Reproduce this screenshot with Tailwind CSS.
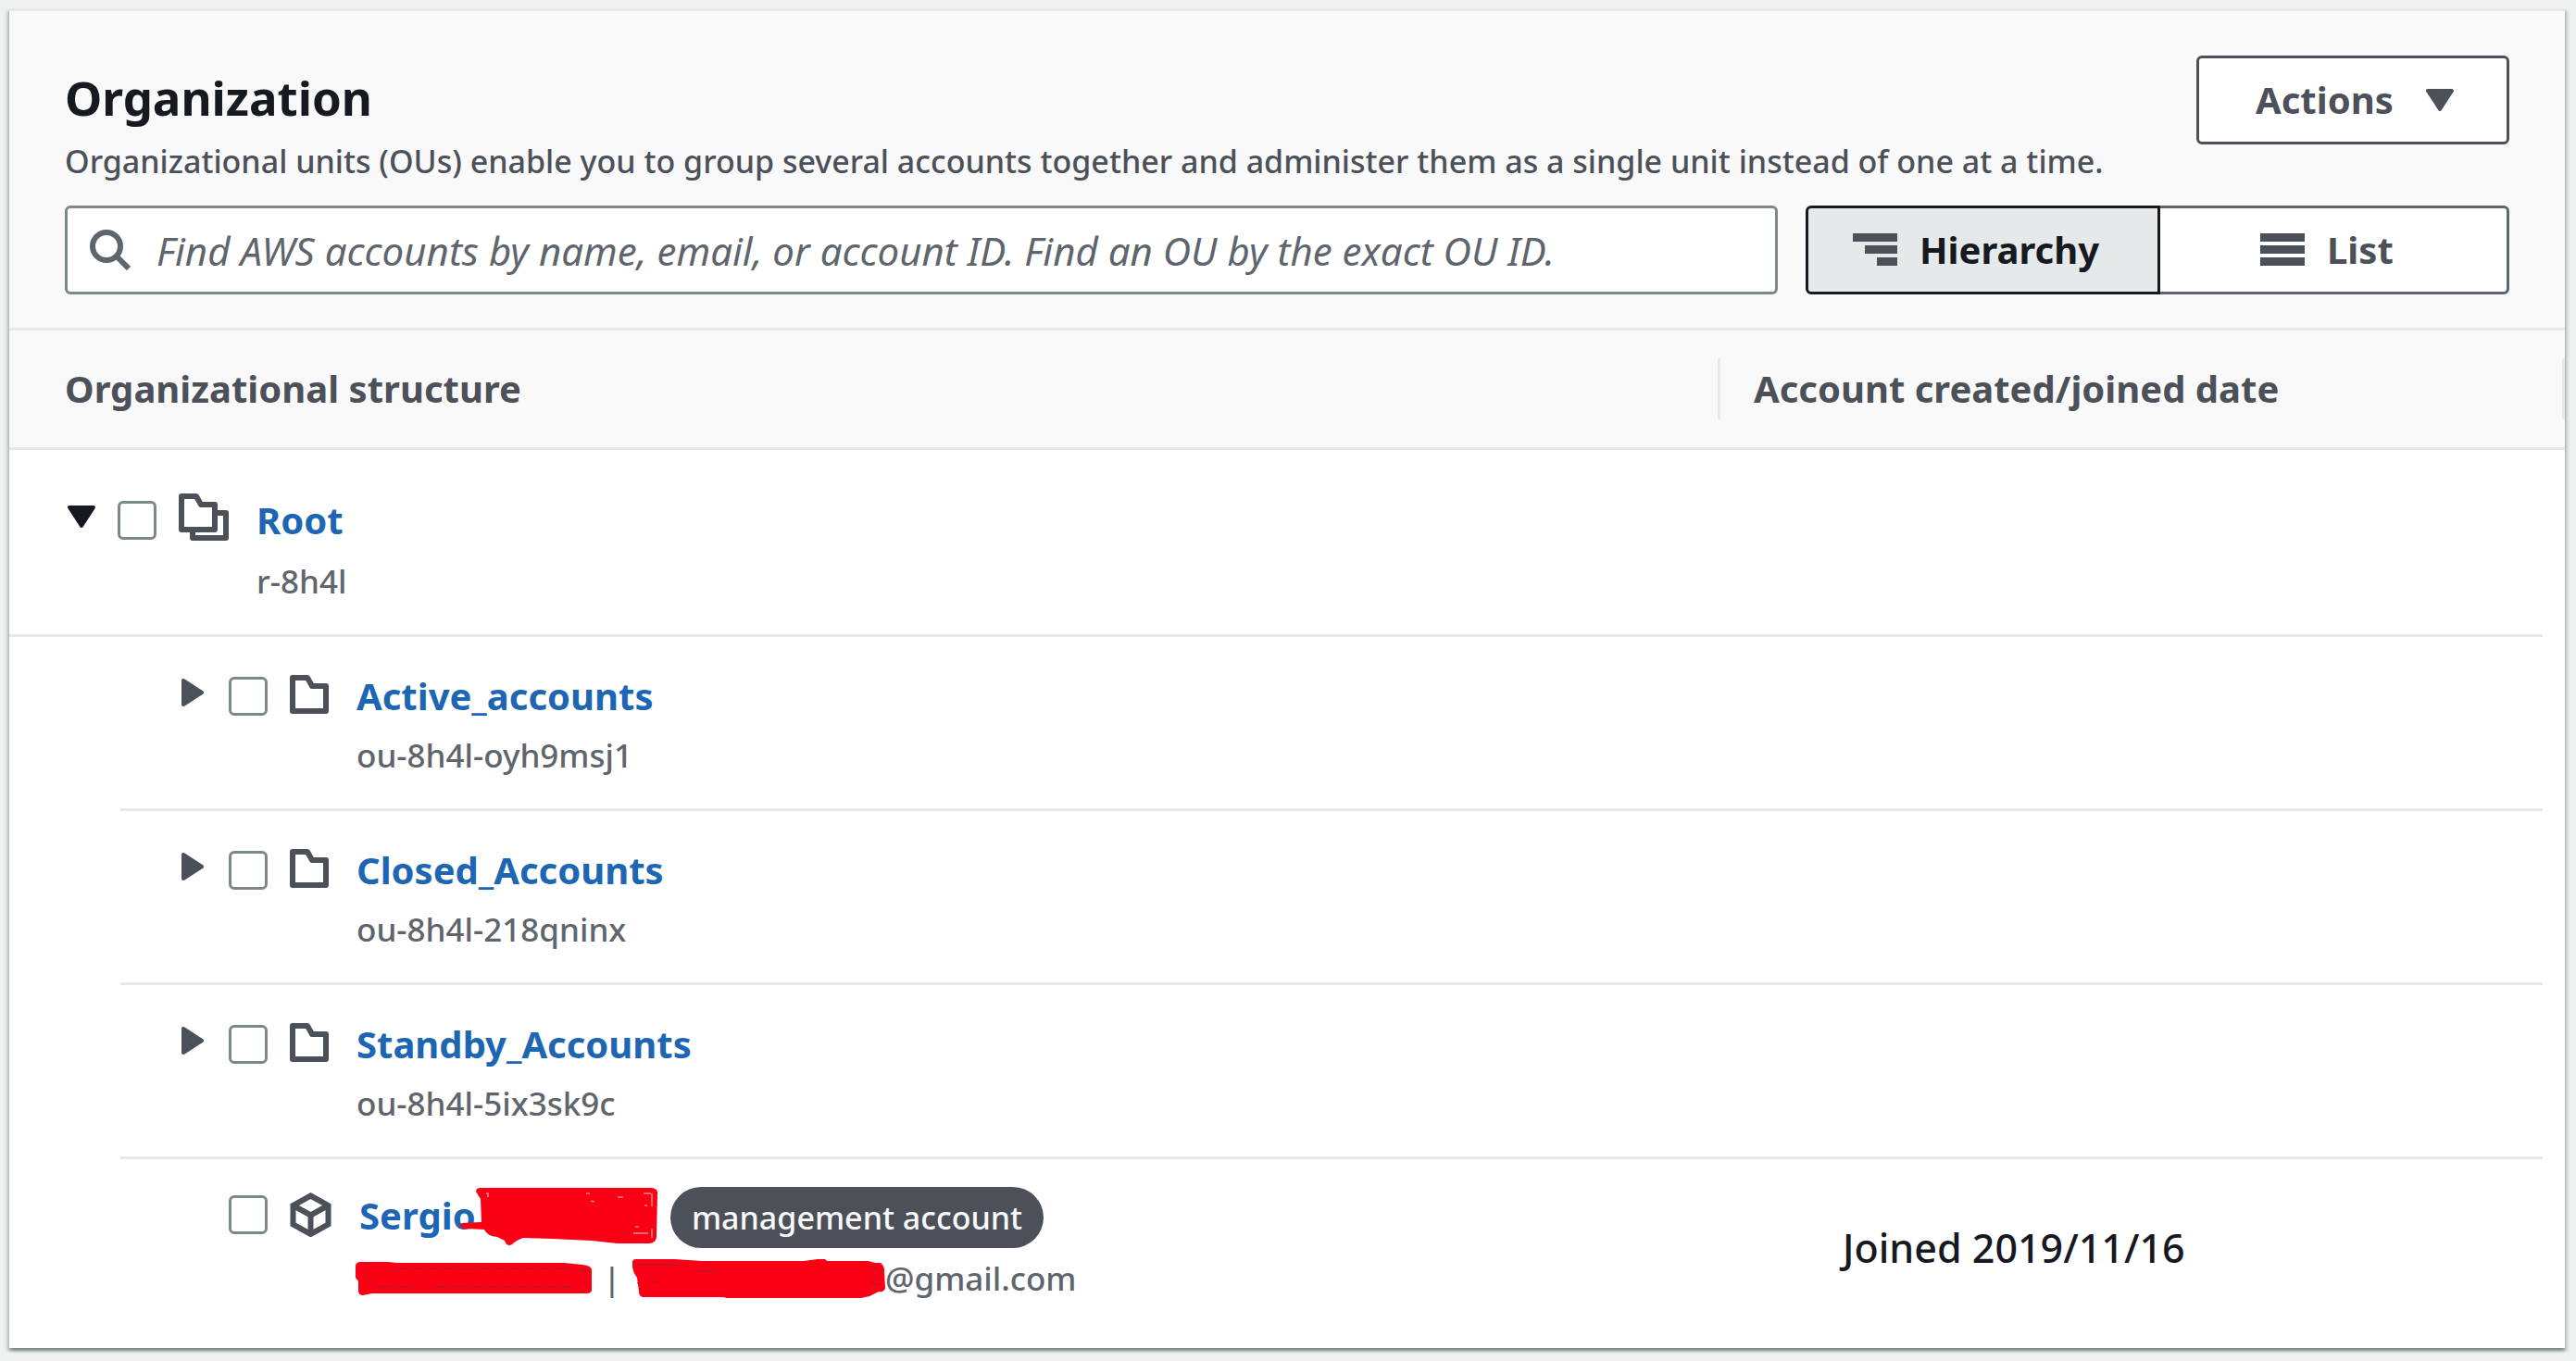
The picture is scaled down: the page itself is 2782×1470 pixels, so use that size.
<!DOCTYPE html>
<html lang="en">
<head>
<meta charset="utf-8">
<title>Organization</title>
<script src="https://cdn.jsdelivr.net/npm/@tailwindcss/browser@4"></script>
</head>
<body class="min-h-screen bg-[#eff1f0] pt-[9px] pr-3 pb-4 pl-[10px] font-['Noto_Sans',sans-serif] text-[#16191f]">
<svg class="hidden" aria-hidden="true">
  <symbol id="caret-down" viewBox="0 0 30 24"><path d="M2 2H28L15 22Z" fill="currentColor" stroke="currentColor" stroke-width="4" stroke-linejoin="round"/></symbol>
  <symbol id="caret-right" viewBox="0 0 24 30"><path d="M2 2V28L22 15Z" fill="currentColor" stroke="currentColor" stroke-width="4" stroke-linejoin="round"/></symbol>
  <symbol id="folder" viewBox="0 0 42 42"><path d="M3 3H19L24 12H39V39H3Z" fill="none" stroke="currentColor" stroke-width="6" stroke-linejoin="round"/></symbol>
</svg>
<main class="border-t-3 border-[#e6e9e8] bg-white shadow-[0_3px_3px_0_rgb(0_28_36/.3),3px_3px_3px_0_rgb(0_28_36/.15),-3px_3px_3px_0_rgb(0_28_36/.15)]">
  <header class="border-b-3 border-[#e6e9e8] bg-[#f9f9f9] pt-12 pr-[60px] pb-9 pl-[60px]">
    <div class="flex items-start justify-between">
      <div class="pt-[15px]">
        <h1 class="text-[51px] leading-[60px] font-bold">Organization</h1>
        <p class="mt-3 text-[34px] leading-[54px] font-medium text-[#4c5059]">Organizational units (OUs) enable you to group several accounts together and administer them as a single unit instead of one at a time.</p>
      </div>
      <button type="button" class="flex h-24 w-[338px] shrink-0 items-center justify-between rounded-md border-3 border-[#4c5059] bg-white px-[57px] text-[40px] font-bold text-[#4c5059]">
        <span class="pl-1">Actions</span>
        <svg class="h-6 w-[30px]"><use href="#caret-down"/></svg>
      </button>
    </div>
    <div class="mt-[21px] flex gap-[30px]">
      <label class="flex h-24 flex-1 items-center rounded-md border-3 border-[#7b8989] bg-white px-6 text-[#5f656d]">
        <svg class="h-11 w-11 shrink-0" viewBox="0 0 44 44" fill="none" stroke="currentColor" stroke-width="6"><circle cx="18" cy="18" r="15"/><path d="M29 29L42 42"/></svg>
        <input type="search" aria-label="Find accounts" placeholder="Find AWS accounts by name, email, or account ID. Find an OU by the exact OU ID." class="ml-7 h-full min-w-0 flex-1 text-[42px] italic outline-none placeholder:text-[#5f656d] placeholder:opacity-100">
      </label>
      <div class="flex text-[40px] font-bold" role="group" aria-label="View">
        <button type="button" aria-pressed="true" class="flex h-24 w-[383px] items-center gap-6 rounded-l-md border-3 border-[#16191f] bg-[#e6e9ea] pl-12">
          <svg class="h-9 w-12 text-[#4c5059]" viewBox="0 0 48 36" fill="currentColor"><path d="M0 0H48V9H0ZM13 13H48V22H13ZM26 26H48V35H26Z"/></svg>
          Hierarchy
        </button>
        <button type="button" aria-pressed="false" class="flex h-24 w-[377px] items-center gap-6 rounded-r-md border-3 border-l-0 border-[#5f656d] bg-white pl-27 text-[#4c5059]">
          <svg class="h-9 w-12" viewBox="0 0 48 36" fill="currentColor"><path d="M0 0H48V9H0ZM0 13H48V22H0ZM0 26H48V35H0Z"/></svg>
          List
        </button>
      </div>
    </div>
  </header>

  <table class="w-full table-fixed border-separate border-spacing-0">
    <colgroup><col class="w-[120px]"><col><col class="w-[888px]"><col class="w-6"></colgroup>
    <thead class="bg-[#f9f9f9] text-left text-[40px] text-[#4c5059]">
      <tr>
        <th colspan="2" scope="col" class="border-b-3 border-[#e6e9e8] py-[30px] pl-[60px]"><div class="h-[66px] border-r-3 border-[#e6e9e8] leading-[66px] font-bold">Organizational structure</div></th>
        <th colspan="2" scope="col" class="border-b-3 border-[#e6e9e8] py-[30px] pl-9"><div class="h-[66px] border-r-3 border-[#e6e9e8] leading-[66px] font-bold">Account created/joined date</div></th>
      </tr>
    </thead>
    <tbody class="text-[35px] leading-[54px] font-medium text-[#5f656d]">
      <tr>
        <td colspan="2" class="border-b-3 border-[#e6e9e8] pt-[49px] pb-[30px] pl-[63px]">
          <div class="flex items-start">
            <div class="flex h-[54px] items-center gap-6">
              <button type="button" aria-label="Collapse Root" class="pb-2 text-[#16191f]"><svg class="h-6 w-[30px]"><use href="#caret-down"/></svg></button>
              <input type="checkbox" aria-label="Select Root" class="size-[42px] appearance-none rounded-md border-3 border-[#7b8989] bg-white">
              <svg class="mb-2 h-[51px] w-[54px] text-[#4c5059]" viewBox="0 0 54 51" fill="none" stroke="currentColor" stroke-width="6" stroke-linejoin="round"><path d="M3 3H19L24 12H39V39H3Z"/><path d="M41 21H51V48H15V41"/></svg>
            </div>
            <div class="ml-[30px]">
              <a href="#root" class="block text-[40px] font-bold text-[#1c66b3]">Root</a>
              <p class="mt-3">r-8h4l</p>
            </div>
          </div>
        </td>
        <td class="border-b-3 border-[#e6e9e8]"></td><td></td>
      </tr>
      <tr>
        <td></td>
        <td class="border-b-3 border-[#e6e9e8] pt-[37px] pb-[30px] pl-[66px]">
          <div class="flex items-start">
            <div class="flex h-[54px] items-center gap-6">
              <button type="button" aria-label="Expand Active_accounts" class="w-[27px] pb-2 text-[#4c5059]"><svg class="h-[30px] w-6"><use href="#caret-right"/></svg></button>
              <input type="checkbox" aria-label="Select Active_accounts" class="size-[42px] appearance-none rounded-md border-3 border-[#7b8989] bg-white">
              <svg class="mb-1 size-[42px] text-[#4c5059]"><use href="#folder"/></svg>
            </div>
            <div class="ml-[30px]">
              <a href="#active" class="block text-[40px] font-bold text-[#1c66b3]">Active_accounts</a>
              <p class="mt-[10px]">ou-8h4l-oyh9msj1</p>
            </div>
          </div>
        </td>
        <td class="border-b-3 border-[#e6e9e8]"></td><td></td>
      </tr>
      <tr>
        <td></td>
        <td class="border-b-3 border-[#e6e9e8] pt-[37px] pb-[30px] pl-[66px]">
          <div class="flex items-start">
            <div class="flex h-[54px] items-center gap-6">
              <button type="button" aria-label="Expand Closed_Accounts" class="w-[27px] pb-2 text-[#4c5059]"><svg class="h-[30px] w-6"><use href="#caret-right"/></svg></button>
              <input type="checkbox" aria-label="Select Closed_Accounts" class="size-[42px] appearance-none rounded-md border-3 border-[#7b8989] bg-white">
              <svg class="mb-1 size-[42px] text-[#4c5059]"><use href="#folder"/></svg>
            </div>
            <div class="ml-[30px]">
              <a href="#closed" class="block text-[40px] font-bold text-[#1c66b3]">Closed_Accounts</a>
              <p class="mt-[10px]">ou-8h4l-218qninx</p>
            </div>
          </div>
        </td>
        <td class="border-b-3 border-[#e6e9e8]"></td><td></td>
      </tr>
      <tr>
        <td></td>
        <td class="border-b-3 border-[#e6e9e8] pt-[37px] pb-[30px] pl-[66px]">
          <div class="flex items-start">
            <div class="flex h-[54px] items-center gap-6">
              <button type="button" aria-label="Expand Standby_Accounts" class="w-[27px] pb-2 text-[#4c5059]"><svg class="h-[30px] w-6"><use href="#caret-right"/></svg></button>
              <input type="checkbox" aria-label="Select Standby_Accounts" class="size-[42px] appearance-none rounded-md border-3 border-[#7b8989] bg-white">
              <svg class="mb-1 size-[42px] text-[#4c5059]"><use href="#folder"/></svg>
            </div>
            <div class="ml-[30px]">
              <a href="#standby" class="block text-[40px] font-bold text-[#1c66b3]">Standby_Accounts</a>
              <p class="mt-[10px]">ou-8h4l-5ix3sk9c</p>
            </div>
          </div>
        </td>
        <td class="border-b-3 border-[#e6e9e8]"></td><td></td>
      </tr>
      <tr>
        <td></td>
        <td class="pt-[30px] pb-12 pl-[117px]">
          <div class="flex items-start">
            <div class="flex h-[60px] items-center gap-6">
              <input type="checkbox" aria-label="Select Sergio" class="size-[42px] appearance-none rounded-md border-3 border-[#7b8989] bg-white">
              <svg class="h-12 w-[45px] text-[#4c5059]" viewBox="0 0 45 48" fill="none" stroke="currentColor" stroke-width="6"><path d="M22.500 3.500L41.500 14V34.500L22.500 45L3.500 34.500V14Z"/><path d="M3.500 14L22.500 24.500L41.500 14M22.500 24.500V45"/></svg>
            </div>
            <div class="ml-[30px]">
              <div class="flex h-[66px] items-center">
                <a href="#sergio" class="w-[109px] pb-1 text-[40px] font-bold text-[#1c66b3]">Sergio</a>
                <svg class="relative h-[64px] w-[214px]" viewBox="0 0 214 64" aria-hidden="true">
                  <path d="M17 4Q17 0 22 0L130 0L207 0Q214 1 213 7L212 53Q211 60 204 60L170 60L142 57L100 55L68 54Q60 57 56 61Q50 64 48 57L40 53Q29 52 26 45L3 44Q-2 41 2 38L23 37L22 12Z" fill="#fa0015"/>
                  <path d="M28 6H31M30 7V10M136 6H140M170 10H176M141 14L145 15M198 6H206M207 6V20M202 19H199M187 49H203M207 44V54M189 42H193" fill="none" stroke="#fff" stroke-opacity=".8"/>
                </svg>
                <span class="ml-[13px] flex h-[66px] w-[403px] items-center justify-center rounded-full bg-[#4c5059] text-[34px] text-[#f9f9f9]">management account</span>
              </div>
              <div class="mt-1.5 flex items-center">
                <svg class="-ml-1 h-9 w-[255px]" viewBox="0 0 255 36" aria-hidden="true">
                  <path d="M0 4Q0 1 4 0H35L45 1H225L245 3Q255 4 255 9V31Q254 34 250 34H18L8 36Q3 36 3 31V21L0 17Z" fill="#fa0015"/>
                  <path d="M45 7H235M25 27H65M88 27H235M243 8H248V12M248 22H244M14 21L17 22" fill="none" stroke="#8f2438" stroke-dasharray="14 3"/>
                </svg>
                <span class="w-11 text-center">|</span>
                <svg class="h-[42px] w-[273px]" viewBox="0 0 273 42" aria-hidden="true">
                  <path d="M0 3Q0 0 4 0H45L75 2H185L200 0H208L210 2H255L262 4H268Q273 8 272 15L273 31Q272 36 266 35L256 40L247 42H102L98 41H11Q7 40 7 35L5 20Q1 15 0 9Z" fill="#fa0015"/>
                  <path d="M5 6H50M70 13H88M22 24L26 25M6 25V27M258 11L264 9L266 13M257 25L267 28" fill="none" stroke="#8f2438"/>
                </svg>
                <span>@gmail.com</span>
              </div>
            </div>
          </div>
        </td>
        <td class="pb-3 pl-33 align-middle text-[43px] text-[#16191f]">Joined 2019/11/16</td><td></td>
      </tr>
    </tbody>
  </table>
</main>
</body>
</html>
